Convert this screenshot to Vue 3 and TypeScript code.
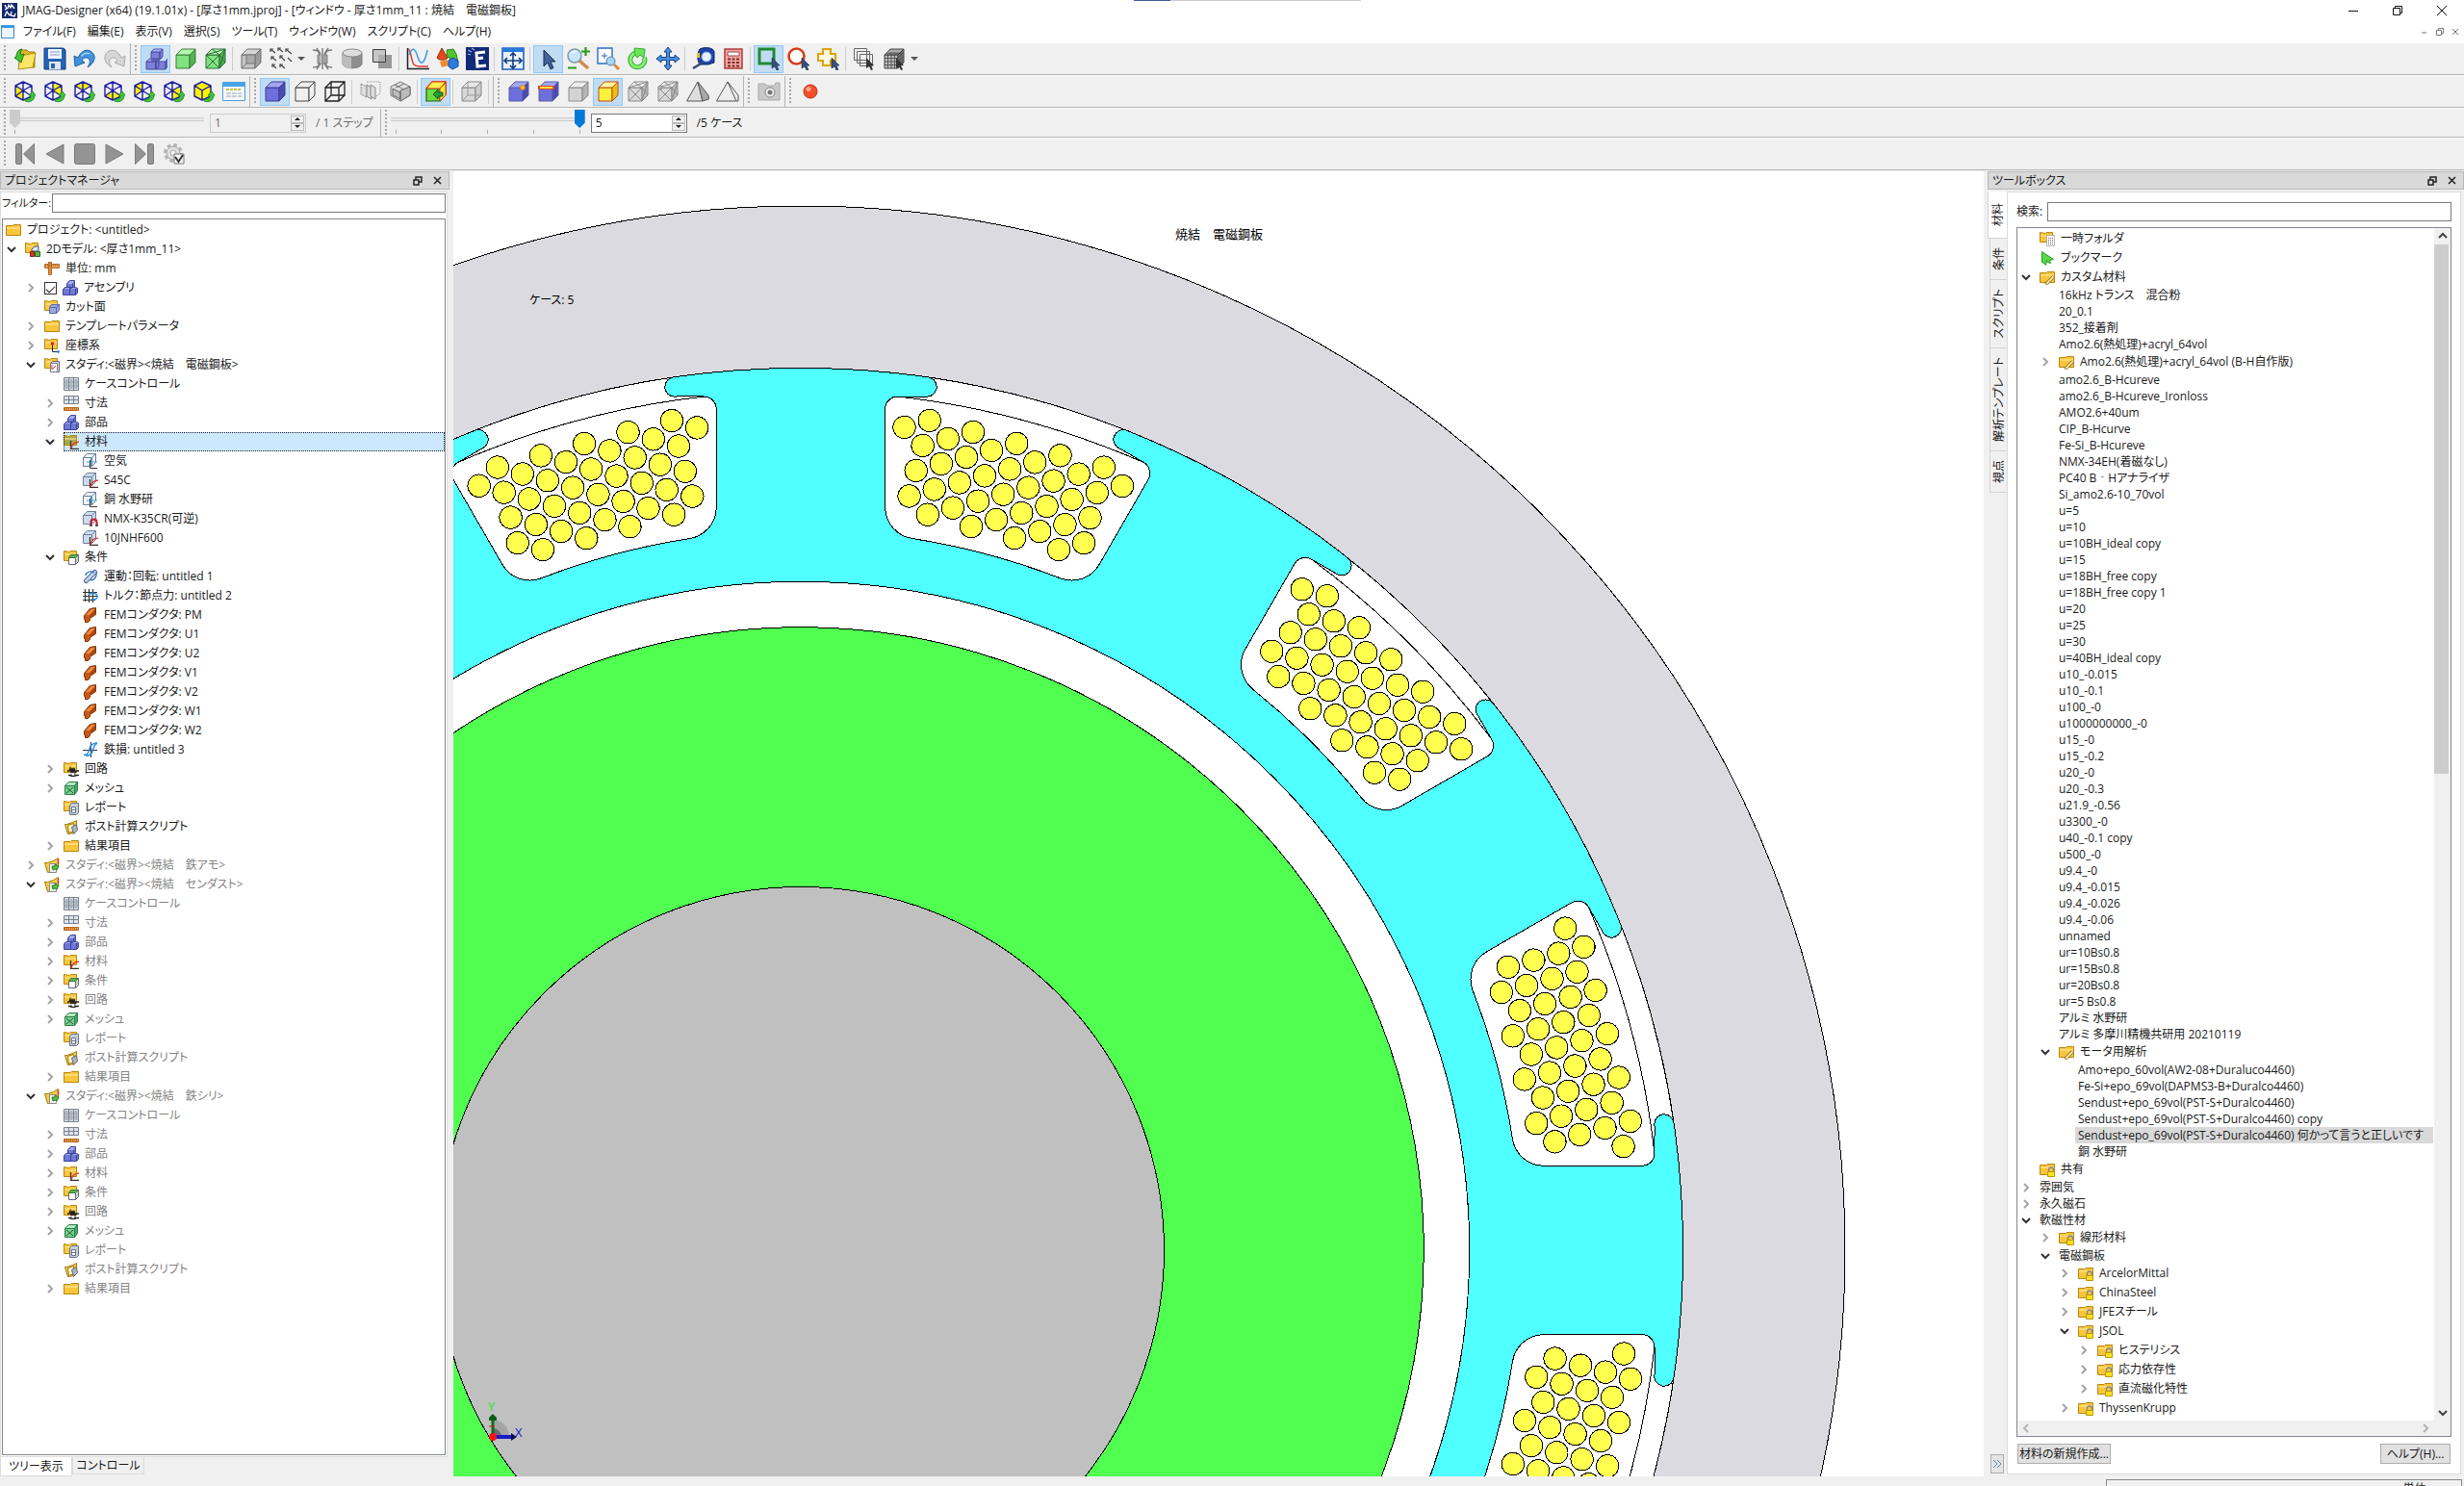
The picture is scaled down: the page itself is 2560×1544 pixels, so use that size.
<script setup lang="ts">
import { ref } from 'vue'

/* ---------- toolbar icons, drawn on a 24 x 24 grid ---------- */
const cube = (front: string, top: string, side: string, line: string): string =>
  `<g stroke="${line}" stroke-linejoin="round"><path fill="${front}" d="M2 8h14v14H2z"/><path fill="${top}" d="M2 8l6-6h14l-6 6z"/><path fill="${side}" d="M16 8l6-6v14l-6 6z"/></g>`

const viewCube = (face: string): string =>
  `<path fill="#fff200" d="${face}"/><path fill="none" stroke="#1c1ca8" stroke-width="1.4" stroke-linejoin="round" d="M10 2l9 4v11l-9 4-8-4V6zM2 6l8 5 9-5M10 11v10M10 2v9M2 17l8-6 9 6"/><path fill="#3fc43a" stroke="#14801a" stroke-width=".8" d="M12 20c4 1 6-1 6-4h-2l4-4 3 4h-1c0 6-6 8-10 6z"/>`

const pointer = '<path fill="#35507c" stroke="#1d2c48" stroke-width=".6" d="M15 11l8 8-3 .3 2 4-2 .7-2-4-3 2z"/>'

const grayCubeX = cube('#d8d8d8', '#eee', '#bbb', '#8a8a8a') + '<path stroke="#8a8a8a" fill="none" d="M2 8l14 14M16 8L2 22M16 8l6 8M16 22l6-20M2 8L22 2M8 2l8 6"/>'

const box = '<path fill="#7d80d8" stroke="#4a4ca0" d="M2 15h10v8H2zM2 15l3-3h10l-3 3zM12 15l3-3v8l-3 3zM12 15h10v8H12zM22 15l2-3v8l-2 3zM7 5h9v8H7zM7 5l3-3h9l-3 3zM16 5l3-3v8l-3 3z"/><path fill="#a9abf0" d="M8 4.500l2-2h8l-2 2zM3 14.500l2-2h2v2z"/>'

const T: Record<string, string> = {
  open: '<path fill="#e0b820" stroke="#9c7a10" d="M6 3h8l2 2h6v16H6z"/><path fill="#ffe566" stroke="#b08c18" d="M7 9l16-3-3 15-15 2z"/><path fill="#43c232" stroke="#1c7d14" d="M3 10c0-5 3-8 6-8-2 2-2 4-1 6l3-1-3 9-7-5z"/>',
  save: '<path fill="#2464b4" stroke="#123c7c" d="M1 1h20l2 2v20H1z"/><path fill="#eef4ff" d="M5 2h14v10H5z"/><path stroke="#8899b8" d="M7 5h10M7 8h10"/><path fill="#dfe6f0" d="M6 15h12v8H6z"/><path fill="#2464b4" d="M8 17h4v5H8z"/>',
  undo: '<path fill="#3f93dc" stroke="#1c5ca4" d="M1 9l1 11 10-4-3-2c2-4 6-4 8-1 1 2 0 5-2 8 6-4 9-9 6-14C17 1 9 2 5 11z"/><path fill="#a8d4f8" d="M8 9c3-4 8-5 11-1-4-2-8-1-10 2z"/>',
  redo: '<path fill="#d6d6d6" stroke="#ababab" d="M23 9l-1 11-10-4 3-2c-2-4-6-4-8-1-1 2 0 5 2 8-6-4-9-9-6-14C7 1 15 2 19 11z"/>',
  parts: box,
  green: cube('#7fe47f', '#b4f7b0', '#52b452', '#3c7c3c'),
  meshg: cube('#7fe47f', '#b4f7b0', '#52b452', '#2f6c38') + '<path stroke="#2f6c38" fill="none" d="M2 8l14 14M16 8L2 22M16 8l6 8M16 22l6-20M2 8L22 2M8 2l8 6"/>',
  wire: cube('#c4c4c4', '#d6d6d6', '#9c9c9c', '#6e6e6e') + '<path fill="#aaa" stroke="#777" d="M7 8h9v9H7zM2 22l5-5"/>',
  vectors: '<g stroke="#444" stroke-width="1.200" fill="none"><path d="M1 2l5 4M9 1l5 4M17 2l6 5M2 10l5 4M11 9l5 5M19 11l4 4M3 18l4 4M11 18l5 4"/><path d="M1 5V2h3M9 4V1h3M17 5V2h3M2 13v-3h3M11 12V9h3M3 21v-3h3M11 21v-3h3"/></g>',
  flux: '<path fill="#a5a5a5" stroke="#808080" d="M7 8h10v9H7z"/><path fill="#d0d0d0" d="M10 8h3v9h-3z"/><g stroke="#7b7b7b" fill="none" stroke-width="1.400"><path d="M12 1v22M2 3c5 0 7 2 7 5M22 3c-5 0-7 2-7 5M2 21c5 0 7-2 7-5M22 21c-5 0-7-2-7-5M6 1l4 6M18 1l-4 6M6 23l4-6M18 23l-4-6"/></g>',
  cyl: '<path fill="#8f8f8f" stroke="#7c7c7c" d="M2 6v12c3 5 17 5 20 0V6z"/><path fill="#bdbdbd" d="M2 6v12c2 3 6 4 9 4V8z"/><ellipse cx="12" cy="6" rx="10" ry="4" fill="#ddd" stroke="#888"/>',
  squares: '<path fill="#999" d="M8 8h14v14H8z"/><path fill="#b5b5b5" fill-opacity=".7" stroke="#3c3c3c" d="M2.500 2.500h13v13h-13z"/>',
  graph: '<path stroke="#222" fill="none" stroke-width="1.500" d="M1.500 1v21.500H24"/><path stroke="#d83a3a" stroke-width="1.500" fill="none" d="M2 2c3 0 3 12 6 16 3 3 9 2 15 2"/><path stroke="#3b9be0" stroke-width="1.500" fill="none" d="M3 8c3-8 6-8 9 2s7 8 10-7"/>',
  shapes: '<path fill="#e24a1c" stroke="#a02a0a" d="M6 1l6 10c-2 3-9 3-11 0z"/><path fill="#52c430" stroke="#28861a" d="M11 3l7-1 3 5 2 9-8 1-1-7-2 1z"/><path fill="#f08a28" d="M4 15l8-2 1 6-7 2z"/><path fill="#2c7ce0" stroke="#154a98" d="M13 14l4-3 6 3v6l-6 3-4-3z"/>',
  eee: '<path fill="#102a78" d="M0 0h24v24H0z"/><path stroke="#9fb4e0" stroke-width="1.200" d="M2 3l4 2M6 1l3 2M2 7l3 1"/><path fill="none" stroke="#fff" stroke-width="3" d="M20 5l-9 1 1 14 9-1M11 12l7-1"/>',
  fit: '<path fill="#eaf2ff" stroke="#1b5fc0" stroke-width="1.600" d="M1 1h22v22H1z"/><path fill="#2878dc" d="M1 1h22v4H1z"/><path stroke="#123c78" fill="none" stroke-width="1.600" d="M3 14h18M12 6v16M6 11l-3 3 3 3M18 11l3 3-3 3M9 9l3-3 3 3M9 19l3 3 3-3"/>',
  arrow: '<path fill="#41629a" stroke="#1a2c50" d="M7 3v17l4-4 3 7 3-1.500-3-6.500h5z"/>',
  zoompm: '<path stroke="#d88a48" stroke-width="3.500" d="M13 14l9 8"/><circle cx="8" cy="9" r="7" fill="#c8e6fa" stroke="#7d98b0" stroke-width="1.500"/><path fill="#fff" d="M4 7c1-3 4-4 7-3-3 1-5 2-7 3z"/><path stroke="#2a9a1c" stroke-width="2.200" d="M19.500 0v9M15 4.500h9M1 21.500h9"/>',
  zoomr: '<path fill="#fff" stroke="#2c6cc4" stroke-width="1.400" d="M1 1h15v16H1z"/><path stroke="#2c6cc4" d="M8 6v6M5 9h6"/><path stroke="#d88a48" stroke-width="3" d="M18 18l5 5"/><circle cx="14.500" cy="14.500" r="4.500" fill="#a8d4f2" stroke="#5080a8"/>',
  rotate: '<path fill="none" stroke="#2fae34" stroke-width="5" d="M18.500 11a7.500 7.500 0 1 1-9-5"/><path fill="none" stroke="#86ee70" stroke-width="3" d="M18.500 11a7.500 7.500 0 1 1-9-5"/><path fill="#6be65c" stroke="#2fae34" d="M8 1l11 1-1 9-4-3-3 3-2-3z"/>',
  move: '<path fill="#4a90e0" stroke="#123c80" d="M12 0l4 5h-2.500v5.500H19V8l5 4-5 4v-2.500h-5.500V19H16l-4 5-4-5h2.500v-5.500H5V16l-5-4 5-4v2.500h5.500V5H8z"/>',
  tape: '<path fill="#2044a4" stroke="#10246c" d="M8 2c6-3 15-1 15 3v11l-6 2H8c-3-5-3-11 0-16z"/><circle cx="15" cy="10" r="5" fill="#e8f2ff" stroke="#7fa8e8"/><path fill="#e8c020" d="M5 6h3v5H5z"/><path stroke="#384870" stroke-width="2.500" d="M1 22l10-6"/>',
  calc: '<path fill="#f2a8a4" stroke="#b03a38" stroke-width="1.500" d="M3 2h18v20H3z"/><path fill="#fff" stroke="#944" d="M6 5h12v4H6z"/><path stroke="#7b2c2c" stroke-width="2" stroke-dasharray="3 1.500" d="M6 12.500h12M6 16h12M6 19.500h12"/>',
  selrect: '<path fill="none" stroke="#1f8a34" stroke-width="3" d="M2 2h15v15H2z"/>' + pointer,
  selcirc: '<circle cx="9.500" cy="9.500" r="8" fill="#fff" stroke="#d83a18" stroke-width="2.500"/>' + pointer,
  selplus: '<path fill="#fffbe0" stroke="#dca410" stroke-width="2.200" d="M6 2h8v5h5v7h-5v5H6v-5H1V7h5z"/>' + pointer,
  layers: '<path fill="none" stroke="#666" d="M1.500 1.500h13v12h-13zM4.500 4.500h13v12h-13zM7.500 7.500h13v12h-13z"/><path fill="#333" d="M14 11l8 8-3 .3 2 4-2 .7-2-4-3 2z"/>',
  meshsel: cube('#bbb', '#aaa', '#888', '#444') + '<path stroke="#444" stroke-width=".8" fill="none" d="M5.500 8v14M9 8v14M12.500 8v14M2 11.500h14M2 15h14M2 18.500h14M16 11l6-6M16 15l6-6M16 19l6-6M6 6h13M4 7h13M18 6v14M20 4v14"/><path fill="#333" d="M14 11l8 8-3 .3 2 4-2 .7-2-4-3 2z"/>',
  v1: viewCube('M2 6l8 5v10l-8-4z'),
  v2: viewCube('M10 2l9 4v11l-9-6z'),
  v3: viewCube('M2 6l8-4 9 4-9 5z'),
  v4: viewCube('M2 17l8-6 9 6-9 4z'),
  v5: viewCube('M2 6l8-4v9l-8 6z'),
  v6: viewCube('M10 11l9-5v11l-9 4z'),
  v7: viewCube('M10 2l9 4v11l-9 4-8-4V6z').replace('M10 2v9M2 17l8-6 9 6', ''),
  win: '<path fill="#f4f8fc" stroke="#4aa0e0" d="M.5 2.500h23v19H.5z"/><path fill="#4aa4e8" d="M1 3h22v4H1z"/><path stroke="#c8c050" stroke-width="2" stroke-dasharray="3 1" d="M4 10h16"/><path stroke="#99a4b0" stroke-dasharray="5 1" d="M4 14h16M4 17h16"/>',
  blue: cube('#6d70dc', '#a3a6f2', '#4a4cb0', '#3c3e90'),
  outline: cube('#f0f0f0', '#f0f0f0', '#f0f0f0', '#444'),
  frame: '<path fill="none" stroke="#222" stroke-width="1.300" d="M2 8h14v14H2zM8 2h14v14H8zM2 8l6-6M16 8l6-6M16 22l6-6M2 22l6-6"/>',
  slices: '<g fill="#ddd" stroke="#888"><path d="M2 4l6 3v11l-6-3z" stroke-dasharray="2 1"/><path d="M8 5l5 3v12l-5-3z"/><path d="M12 5l5 3v12l-5-3z"/><path fill="none" stroke-dasharray="1 1" d="M8 2h14v12l-4 3"/></g>',
  hexbox: '<path fill="#e0e0e0" stroke="#777" d="M12 2l10 5v9l-10 6-10-6V7z"/><path fill="#bbb" stroke="#666" d="M12 11l10-4v9l-10 6zM4 9l8 4v7l-8-4z"/><path stroke="#777" d="M6 5l10 5M16 4L7 8"/>',
  colorcube: '<path fill="#ffee30" stroke="#d83a18" stroke-width="1.600" d="M2 9l6-7h14v13l-6 7"/><path fill="#6bdc3c" stroke="#1e5c1c" stroke-width="1.200" d="M2 9h14v13H2z"/><path fill="#ffe838" stroke="#d83a18" d="M16 9l6-6v13l-6 6z"/><path fill="#fff04a" stroke="#d83a18" d="M2 9l6-7h14l-6 7z"/><path fill="#2aa038" stroke="#0c5c18" d="M9 15l5-5v3h5v4h-5v3z"/>',
  graywire: cube('#d8d8d8', '#e8e8e8', '#ccc', '#888') + '<path fill="none" stroke="#999" d="M8 2v14h14M2 22l6-6"/>',
  bluepoint: cube('#6d70dc', '#a3a6f2', '#4a4cb0', '#5a5ca8') + '<circle cx="16" cy="8" r="2.500" fill="#ffc030" stroke="#d07820"/>',
  blueedge: cube('#6d70dc', '#a3a6f2', '#4a4cb0', '#5a5ca8') + '<path stroke="#e04828" stroke-width="4" d="M1 8h17"/><path stroke="#ffe040" stroke-width="2" d="M3 8h13"/>',
  graycube: cube('#d4d4d4', '#ececec', '#b4b4b4', '#8a8a8a'),
  yellow: cube('#fff23c', '#fff99c', '#e8c020', '#c04a18'),
  graymesh: grayCubeX,
  graymesh2: grayCubeX + '<circle cx="4" cy="8" r="2" fill="#bbb" stroke="#888"/>',
  pyr: '<path fill="#dedede" stroke="#555" d="M12 2L.5 22H17z"/><path fill="#a8a8a8" stroke="#555" d="M12 2l5 20 6.500-2L23 16z"/>',
  pyr2: '<path fill="#ececec" stroke="#555" d="M12 2L.5 22H23V16z"/><path fill="none" stroke="#555" d="M12 2l9 20"/>',
  camera: '<path fill="#c8c8c8" stroke="#aaa" d="M1 4h7l2 2h8l1-3h4v18H1z"/><circle cx="13" cy="13" r="5" fill="#eee" stroke="#888"/><circle cx="13" cy="13" r="2.500" fill="#777"/>',
  ball: '<circle cx="12" cy="12" r="7" fill="#f4502c" stroke="#c03010"/><circle cx="10" cy="9.500" r="2.500" fill="#ffa890"/>',
  first: '<g fill="#949494" stroke="#7a7a7a"><rect x="2.500" y="1.500" width="6" height="21" rx="1.500"/><path d="M21.500 1.500v21L10.500 12z"/></g>',
  prev: '<path fill="#949494" stroke="#7a7a7a" stroke-linejoin="round" d="M21 2v20L3 12z"/>',
  stop: '<rect x="1.500" y="1.500" width="21" height="21" rx="2" fill="#949494" stroke="#7a7a7a"/>',
  play: '<path fill="#949494" stroke="#7a7a7a" stroke-linejoin="round" d="M3 2v20l18-10z"/>',
  last: '<g fill="#949494" stroke="#7a7a7a"><rect x="15.500" y="1.500" width="6" height="21" rx="1.500"/><path d="M2.500 1.500v21L13.500 12z"/></g>',
  gear: '<circle cx="11" cy="11" r="8" fill="none" stroke="#b4b4b4" stroke-width="4" stroke-dasharray="3.500 2.780"/><circle cx="11" cy="11" r="7" fill="#e0e0e0" stroke="#a4a4a4"/><circle cx="11" cy="11" r="3" fill="#f0f0f0" stroke="#aaa"/><path fill="#f4f4f4" stroke="#777" d="M12 12h10v10H12z"/><path fill="none" stroke="#333" stroke-width="2" d="M13 15l3.500 5L21 13"/>',
}

/* ---------- tree icons, drawn on a 16 x 16 grid ---------- */
const folder = (a = '#f8c63c', b = '#b8860f'): string =>
  `<path fill="${a}" stroke="${b}" d="M.5 3.500v10h15v-11H8l-1 1z"/><path fill="#ffe38a" fill-opacity=".7" d="M1 5h14v2H1z"/>`
const halfFolder = (a = '#f8c63c'): string =>
  `<path fill="${a}" stroke="#b8860f" d="M.5 1.500v10h13v-10H7l-1 1z"/><path fill="#ffe38a" fill-opacity=".6" d="M1 4h12v2H1z"/>`
const curve = '<path fill="none" stroke="#333" stroke-width="1.300" d="M7.500 7v8.500H16"/><path fill="none" stroke="#e03a28" stroke-width="1.500" d="M8 15c1-5 3-6 8-7"/>'
const sheetCube = (fill: string): string =>
  `<path fill="${fill}" stroke="#6b7f98" d="M.5 4.500h9v9h-9zM.5 4.500l4-4h9l-4 4zM9.500 4.500l4-4v9l-4 4z"/>`

const S: Record<string, string> = {
  folder: folder(),
  model: halfFolder() + '<path fill="#dce6f6" stroke="#456" d="M7 8l3-3h4v5H7z"/><path fill="#d83a28" stroke="#901c10" d="M5.500 10.500h4v5h-4z"/><path fill="#58b848" stroke="#286820" d="M10.500 10.500h5v5h-5z"/>',
  unit: '<path fill="#f0a860" stroke="#b86820" d="M.5 3.500h15v4h-15z"/><path fill="#f0a860" stroke="#b86820" d="M4.500 1.500h3v13h-3z"/><path stroke="#8a4810" stroke-dasharray="1 1" d="M1 5h14M6 2v12"/>',
  parts: '<path fill="#6f78d4" stroke="#3c4498" d="M.5 9.500l2-2h11l2 1v5l-2 2H.5zM4.500 3.500l3-3h5v6l-2 2h-6z"/><path fill="#a5acf2" d="M5 4l3-3h4l-2 3zM2 9l1-1h4v1zM9 9l1-1h4l-1 1z"/><path stroke="#3c4498" d="M7.500 9v6M13.500 9v6M10.500 4v4" fill="none"/>',
  cut: halfFolder() + '<path fill="#98a8e0" stroke="#5868a8" d="M5.500 8.500h7v6h-7zM5.500 8.500l2-3h8l-3 3zM12.500 8.500l3-3v6l-3 3z"/>',
  axis: halfFolder() + '<path fill="none" stroke="#222" d="M8.500 6v8.500H15"/><circle cx="8.500" cy="6" r="1.800" fill="#d82818"/><circle cx="14.500" cy="14.500" r="1.400" fill="#2a86e0"/>',
  study: halfFolder() + '<path fill="#d8dce4" stroke="#667" d="M8.500 4.500h7v11h-9v-9z"/><path fill="#fff" stroke="#778" d="M6.500 6.500h7v9h-7z"/><path stroke="#c83a38" fill="none" d="M8 8v5l4-4"/>',
  grid: '<path fill="#dce2ec" stroke="#78828e" d="M.5 1.500h15v13H.5zM.5 6h15M.5 10h15M5.500 1v13M10.500 1v13"/><path stroke="#78828e" stroke-dasharray="3 2" d="M1.500 4h14M1.500 8h14M1.500 12h14"/>',
  dims: '<path fill="#dce2ec" stroke="#78828e" d="M.5 .5h15v8H.5zM.5 4.500h15M5.500 .5v8M10.500 .5v8"/><path fill="#f0a050" stroke="#b86820" d="M.5 12.500h15v3H.5z"/><path stroke="#8a4810" stroke-dasharray="1 1" d="M1 14h14"/>',
  mat: halfFolder() + curve,
  matsel: halfFolder('#a8a84c') + curve,
  air: sheetCube('#eef4fa') + '<path fill="none" stroke="#4aa8d8" d="M4 9h11M8.500 4v9"/><path fill="none" stroke="#333" d="M7.500 7v8.500H15"/>',
  steel: sheetCube('#cddbea') + curve,
  magnet: sheetCube('#cddbea') + '<path fill="none" stroke="#c82030" stroke-width="2.200" d="M8.500 15.500v-4a3 3 0 0 1 6 0v4"/><path stroke="#444" stroke-width="2.500" d="M8.500 14v2M14.500 14v2"/>',
  cond: halfFolder() + '<path fill="#fff" stroke="#667" d="M5.500 8.500h7v7h-7z"/><path fill="#58b848" stroke="#38783c" d="M5.500 8.500l2-3h8l-3 3z"/><path fill="#c8d8cc" stroke="#667" d="M12.500 8.500l3-3v7l-3 3z"/>',
  motion: '<path stroke="#506490" stroke-width="5" stroke-linecap="round" d="M3.500 12.500l9-9"/><path stroke="#c4d4ec" stroke-width="3" stroke-linecap="round" d="M3.500 12.500l9-9"/><path fill="none" stroke="#2a78c8" stroke-width="1.300" d="M3 7c0-4 5-5 9-3M14 4c1 4-2 8-6 8"/>',
  torque: '<path fill="none" stroke="#333" stroke-width="1.200" d="M2.500 1v13M6.500 1v14M10.500 1v14M0 4.500h15M0 8.500h15M0 12.500h13"/><path fill="none" stroke="#2a90d8" stroke-width="1.400" d="M6 7c3-3 8-2 9 1s-3 5-6 3"/>',
  fem: '<path fill="#c85818" stroke="#7c3408" d="M1.500 8.500l6-7 6-1v7l-6 4v2l-2 2h-3v-3h-1z"/><path fill="#ec8c40" d="M3 8l6-6h4L7 8z"/><path fill="#a84410" d="M7 9l6-7v5l-5 4z"/>',
  iron: '<path fill="none" stroke="#333" d="M8.500 0v16M0 8.500h15"/><path fill="none" stroke="#2a90e0" stroke-width="1.500" d="M1 13c4 1 5-2 6-6s3-6 8-6M3 14c5 1 7-3 8-7s2-5 4-6"/>',
  circuit: halfFolder() + '<path fill="none" stroke="#222" stroke-width="1.300" d="M4 10h2l1-3 1 5 1-5 1 5 1-5 1 5 1-2h3M5 14.500h3M8 13.500v2h4v-2M12 14.500h4"/>',
  mesh: '<path fill="#78d08c" stroke="#2c7c48" d="M1.500 5.500h10v9h-10z"/><path fill="#b0ecc0" stroke="#2c7c48" d="M1.500 5.500l4-4h9l-3 4z"/><path fill="#48a868" stroke="#2c7c48" d="M11.500 5.500l3-4v9l-3 4z"/><path stroke="#1c5c38" d="M3 7l7 6M10 7l-7 6"/>',
  report: halfFolder() + '<path fill="#c8ced8" stroke="#667488" d="M6.500 5.500l2-2h7v10l-2 2h-7z"/><path fill="#fff" stroke="#667488" d="M8.500 7.500h4v6h-4zM8.500 10.500h4"/>',
  script: '<path fill="#f4d040" stroke="#a07810" d="M1.500 5.500h2l6-2 4-2v8l-2 5-7 1z"/><path fill="#fff8c8" stroke="#a07810" d="M4.500 6.500l6-2v8l-5 2z"/><path fill="#aeb4c0" stroke="#667" d="M8.500 8.500l5-3 1 6-4 4z"/>',
  oldstudy: '<path fill="#f4d040" stroke="#a07810" d="M.5 5.500h3l6-2 5-3v9l-3 5-8 1z"/><path fill="#f4f4f4" stroke="#889" d="M5.500 6.500h7v9h-7z"/><path stroke="#d03028" stroke-width="1.500" fill="none" d="M14.500 2v5"/><path fill="#58c03c" stroke="#2c7c20" d="M8 9h3V7l4 2-2 4-2-1-2 1z"/>',
  temp: halfFolder() + '<path fill="#fff" stroke="#778" stroke-dasharray="1 1" d="M7.500 4.500h8v11h-8z"/><path stroke="#667" stroke-dasharray="1 1" d="M9 7.500h5M9 9.500h5M9 11.500h5M9 13.500h5"/>',
  bookmark: '<path fill="#58d848" stroke="#2a9a28" d="M2.500 12.500V1.500l12 8-4 1 1 3-3-1-1-2-1 5-2-2z"/>',
  custom: folder() + '<path stroke="#806020" stroke-width="3.200" d="M6.500 15.500l8-8"/><path stroke="#ffe8a0" stroke-width="1.800" d="M7 15l7.500-7.500"/>',
  lock: folder() + '<path fill="none" stroke="#888" stroke-width="1.300" d="M9.500 11V8.500a2.500 2.500 0 0 1 5 0V11"/><path fill="#ffe020" stroke="#b89808" d="M8.500 10.500h7v5h-7z"/>',
}

/* ---------- menus and toolbars ---------- */
const menus = ['ファイル(F)', '編集(E)', '表示(V)', '選択(S)', 'ツール(T)', 'ウィンドウ(W)', 'スクリプト(C)', 'ヘルプ(H)']

/* '|' is a divider, 'v' a drop-down arrow, '*' marks a pressed button */
const row1: string[][] = [
  ['open', 'save', 'undo', 'redo'],
  ['*parts', 'green', 'meshg', '|', 'wire', 'vectors', 'v', 'flux', 'cyl', 'squares', '|', 'graph', 'shapes', 'eee', '|', 'fit', '|',
    '*arrow', 'zoompm', 'zoomr', 'rotate', 'move', '|', 'tape', 'calc', '|', '*selrect', 'selcirc', 'selplus', '|', 'layers', 'meshsel', 'v'],
]
const row2: string[][] = [
  ['v1', 'v2', 'v3', 'v4', 'v5', 'v6', 'v7', 'win'],
  ['*blue', 'outline', 'frame', '|', 'slices', 'hexbox', '|', '*colorcube', '|', 'graywire', '|'],
  ['bluepoint', 'blueedge', 'graycube', '*yellow', 'graymesh', 'graymesh2', 'pyr', 'pyr2'],
  ['camera'],
  ['ball'],
]
const player = ['first', 'prev', 'stop', 'play', 'last', 'gear']
const step = ref(1)
const caseNo = ref(5)
const stepPos = ref(0)

/* ---------- project tree ---------- */
interface Node { l: number; i: string; t: string; e?: '+' | '-'; c?: boolean; s?: boolean; g?: boolean }
const studyBody = (g: boolean): Node[] => [
  { l: 3, i: 'grid', t: 'ケースコントロール', g },
  { l: 3, i: 'dims', t: '寸法', e: '+', g },
  { l: 3, i: 'parts', t: '部品', e: '+', g },
  { l: 3, i: 'mat', t: '材料', e: '+', g },
  { l: 3, i: 'cond', t: '条件', e: '+', g },
  { l: 3, i: 'circuit', t: '回路', e: '+', g },
  { l: 3, i: 'mesh', t: 'メッシュ', e: '+', g },
  { l: 3, i: 'report', t: 'レポート', g },
  { l: 3, i: 'script', t: 'ポスト計算スクリプト', g },
  { l: 3, i: 'folder', t: '結果項目', e: '+', g },
]
const project: Node[] = [
  { l: 0, i: 'folder', t: 'プロジェクト: <untitled>' },
  { l: 1, i: 'model', t: '2Dモデル: <厚さ1mm_11>', e: '-' },
  { l: 2, i: 'unit', t: '単位: mm' },
  { l: 2, i: 'parts', t: 'アセンブリ', e: '+', c: true },
  { l: 2, i: 'cut', t: 'カット面' },
  { l: 2, i: 'folder', t: 'テンプレートパラメータ', e: '+' },
  { l: 2, i: 'axis', t: '座標系', e: '+' },
  { l: 2, i: 'study', t: 'スタディ:<磁界><焼結　電磁鋼板>', e: '-' },
  ...studyBody(false).slice(0, 3),
  { l: 3, i: 'matsel', t: '材料', e: '-', s: true },
  { l: 4, i: 'air', t: '空気' },
  { l: 4, i: 'steel', t: 'S45C' },
  { l: 4, i: 'air', t: '銅 水野研' },
  { l: 4, i: 'magnet', t: 'NMX-K35CR(可逆)' },
  { l: 4, i: 'steel', t: '10JNHF600' },
  { l: 3, i: 'cond', t: '条件', e: '-' },
  { l: 4, i: 'motion', t: '運動：回転: untitled 1' },
  { l: 4, i: 'torque', t: 'トルク：節点力: untitled 2' },
  ...['PM', 'U1', 'U2', 'V1', 'V2', 'W1', 'W2'].map((n): Node => ({ l: 4, i: 'fem', t: 'FEMコンダクタ: ' + n })),
  { l: 4, i: 'iron', t: '鉄損: untitled 3' },
  ...studyBody(false).slice(5),
  { l: 2, i: 'oldstudy', t: 'スタディ:<磁界><焼結　鉄アモ>', e: '+', g: true },
  { l: 2, i: 'oldstudy', t: 'スタディ:<磁界><焼結　センダスト>', e: '-', g: true },
  ...studyBody(true),
  { l: 2, i: 'oldstudy', t: 'スタディ:<磁界><焼結　鉄シリ>', e: '-', g: true },
  ...studyBody(true),
]

/* ---------- toolbox tree ---------- */
const plain = (l: number, names: string[]): Node[] => names.map((t) => ({ l, i: '', t }))
const toolbox: Node[] = [
  { l: 0, i: 'temp', t: '一時フォルダ' },
  { l: 0, i: 'bookmark', t: 'ブックマーク' },
  { l: 0, i: 'custom', t: 'カスタム材料', e: '-' },
  ...plain(1, ['16kHz トランス　混合粉', '20_0.1', '352_接着剤', 'Amo2.6(熱処理)+acryl_64vol']),
  { l: 1, i: 'custom', t: 'Amo2.6(熱処理)+acryl_64vol (B-H自作版)', e: '+' },
  ...plain(1, ['amo2.6_B-Hcureve', 'amo2.6_B-Hcureve_Ironloss', 'AMO2.6+40um', 'CIP_B-Hcurve', 'Fe-Si_B-Hcureve', 'NMX-34EH(着磁なし)',
    'PC40 B‐Hアナライザ', 'Si_amo2.6-10_70vol', 'u=5', 'u=10', 'u=10BH_ideal copy', 'u=15', 'u=18BH_free copy', 'u=18BH_free copy 1',
    'u=20', 'u=25', 'u=30', 'u=40BH_ideal copy', 'u10_-0.015', 'u10_-0.1', 'u100_-0', 'u1000000000_-0', 'u15_-0', 'u15_-0.2', 'u20_-0',
    'u20_-0.3', 'u21.9_-0.56', 'u3300_-0', 'u40_-0.1 copy', 'u500_-0', 'u9.4_-0', 'u9.4_-0.015', 'u9.4_-0.026', 'u9.4_-0.06', 'unnamed',
    'ur=10Bs0.8', 'ur=15Bs0.8', 'ur=20Bs0.8', 'ur=5 Bs0.8', 'アルミ 水野研', 'アルミ 多摩川精機共研用 20210119']),
  { l: 1, i: 'custom', t: 'モータ用解析', e: '-' },
  ...plain(2, ['Amo+epo_60vol(AW2-08+Duraluco4460)', 'Fe-Si+epo_69vol(DAPMS3-B+Duralco4460)', 'Sendust+epo_69vol(PST-S+Duralco4460)',
    'Sendust+epo_69vol(PST-S+Duralco4460) copy']),
  { l: 2, i: '', t: 'Sendust+epo_69vol(PST-S+Duralco4460) 何かって言うと正しいです', s: true },
  { l: 2, i: '', t: '銅 水野研' },
  { l: 0, i: 'lock', t: '共有' },
  { l: 0, i: '', t: '雰囲気', e: '+' },
  { l: 0, i: '', t: '永久磁石', e: '+' },
  { l: 0, i: '', t: '軟磁性材', e: '-' },
  { l: 1, i: 'lock', t: '線形材料', e: '+' },
  { l: 1, i: '', t: '電磁鋼板', e: '-' },
  { l: 2, i: 'lock', t: 'ArcelorMittal', e: '+' },
  { l: 2, i: 'lock', t: 'ChinaSteel', e: '+' },
  { l: 2, i: 'lock', t: 'JFEスチール', e: '+' },
  { l: 2, i: 'lock', t: 'JSOL', e: '-' },
  { l: 3, i: 'lock', t: 'ヒステリシス', e: '+' },
  { l: 3, i: 'lock', t: '応力依存性', e: '+' },
  { l: 3, i: 'lock', t: '直流磁化特性', e: '+' },
  { l: 2, i: 'lock', t: 'ThyssenKrupp', e: '+' },
]
const sideTabs = ['材料', '条件', 'スクリプト', '解析テンプレート', '視点']

/* ---------- motor cross-section, centred on the origin ---------- */
type P = [number, number]
const mirror = ([x, y]: P): P => {
  /* reflect over the slot axis, 15 degrees clockwise of the tooth above */
  const a = (150 * Math.PI) / 180
  return [x * Math.cos(a) + y * Math.sin(a), x * Math.sin(a) - y * Math.cos(a)]
}
const at = ([x, y]: P): string => `${x.toFixed(1)} ${(-y).toFixed(1)}`
const tip: P = [133, 906.9]
const under: P = [129, 887]
const shoulder: P = [100.7, 887]
const wall: P = [87.7, 874]
const foot: P = [87.7, 772.1]
const heel: P = [115.6, 739.5]
const slot = `M${at(heel)}A33 33 0 0 1 ${at(foot)}L${at(wall)}A13 13 0 0 1 ${at(shoulder)}L${at(under)}A10 10 0 0 0 ${at(tip)}`
  + `A916.6 916.6 0 0 1 ${at(mirror(tip))}A10 10 0 0 0 ${at(mirror(under))}L${at(mirror(shoulder))}A13 13 0 0 1 ${at(mirror(wall))}`
  + `L${at(mirror(foot))}A33 33 0 0 1 ${at(mirror(heel))}A748.5 748.5 0 0 0 ${at(heel)}Z`
const liner = `M${at(shoulder)}A893 893 0 0 1 ${at(mirror(shoulder))}`

/* wire bundle of the slot at 45 degrees: first wire of each row and its count */
const wireRows: [number, number, number][] = [
  [520.7, -686.7, 2], [527.7, -660.7, 3], [508.7, -641.7, 5], [489.3, -622.3, 7],
  [496.3, -596, 8], [529.3, -562.7, 7], [562.3, -529.7, 4], [596, -496.3, 2],
]
const wires = wireRows.flatMap(([x, y, n]) => Array.from({ length: n }, (_, k): P => [x + k * 26.15, y + k * 7]))
const slotTurns = [-30, 0, 30, 60, 90]
</script>

<template>
  <div class="app">
    <header class="title">
      <svg class="i16" viewBox="0 0 16 16" aria-hidden="true"><path fill="#14286c" d="M0 0h16v16H0z" /><path fill="none" stroke="#fff" stroke-width="1.300" d="M3 2l2 4-2 1M6 6l1-4 2 3 1-3 3 4M3 14l2-5 3 4M10 9l-1 4 4 1 1-3" /></svg>
      <span>JMAG-Designer (x64) (19.1.01x) - [厚さ1mm.jproj] - [ウィンドウ - 厚さ1mm_11 : 焼結　電磁鋼板]</span>
      <i class="peek" />
      <nav class="wbtns">
        <button aria-label="最小化"><svg viewBox="0 0 12 12"><path d="M1 6.500h10" /></svg></button>
        <button aria-label="元に戻す"><svg viewBox="0 0 12 12"><path d="M1.500 3.500h7v7h-7zM3.500 3V1.500h7v7H9" /></svg></button>
        <button aria-label="閉じる"><svg viewBox="0 0 12 12"><path d="M1 1l10 10M11 1L1 11" /></svg></button>
      </nav>
    </header>

    <nav class="menu">
      <svg class="i16" viewBox="0 0 16 16" aria-hidden="true"><path fill="#eef5fc" stroke="#3c8cd0" d="M1.500 1.500h13v13h-13z" /><path fill="#3c9ae4" d="M1 1h14v3H1z" /></svg>
      <button v-for="m in menus" :key="m">{{ m }}</button>
      <span class="mdi">
        <svg viewBox="0 0 8 8"><path d="M1 5h5" /></svg>
        <svg viewBox="0 0 8 8"><path d="M.5 2.500h5v5h-5zM2.500 2V.5h5v5H6" /></svg>
        <svg viewBox="0 0 8 8"><path d="M1 1l6 6M7 1L1 7" /></svg>
      </span>
    </nav>

    <div v-for="(row, r) in [row1, row2]" :key="r" class="bar">
      <div v-for="(grp, g) in row" :key="g" class="grp">
        <i class="grip" />
        <template v-for="(b, k) in grp" :key="k">
          <i v-if="b === '|'" class="div" />
          <button v-else-if="b === 'v'" class="drop" aria-label="メニューを開く" />
          <button v-else class="tb" :class="{ on: b[0] === '*' }" :aria-label="b.replace('*', '')">
            <svg viewBox="0 0 24 24" v-html="T[b.replace('*', '')]" />
          </button>
        </template>
      </div>
    </div>

    <div class="bar steps">
      <div class="grp off">
        <i class="grip" />
        <div class="slide">
          <input v-model="stepPos" type="range" min="0" max="4" aria-label="ステップ位置" disabled>
          <div class="ticks"><i /></div>
        </div>
        <div class="spin"><input v-model="step" aria-label="ステップ" disabled><span><button aria-label="増やす" /><button class="dn" aria-label="減らす" /></span></div>
        <span class="of">/ 1 ステップ</span>
      </div>
      <div class="grp">
        <i class="grip" />
        <div class="slide">
          <input v-model="caseNo" type="range" min="1" max="5" aria-label="ケース位置">
          <div class="ticks"><i v-for="n in 5" :key="n" /></div>
        </div>
        <div class="spin"><input v-model="caseNo" aria-label="ケース"><span><button aria-label="増やす" /><button class="dn" aria-label="減らす" /></span></div>
        <span class="of">/5 ケース</span>
      </div>
    </div>

    <div class="bar">
      <div class="grp">
        <i class="grip" />
        <button v-for="p in player" :key="p" class="tb" :aria-label="p"><svg viewBox="0 0 24 24" v-html="T[p]" /></button>
      </div>
    </div>

    <main>
      <aside class="left">
        <h2>プロジェクトマネージャ
          <svg viewBox="0 0 10 10"><path d="M1 4h5v5H1zM3 4V1h6v5H6" /></svg>
          <svg viewBox="0 0 10 10"><path d="M1 1l7 7M8 1L1 8" /></svg>
        </h2>
        <div class="pane">
          <div class="find"><label for="filter">フィルター:</label><input id="filter"></div>
          <ul class="tree">
            <li v-for="(n, k) in project" :key="k" :class="{ gray: n.g }" :style="{ paddingLeft: n.l * 20 + 3 + 'px' }">
              <svg v-if="n.e" class="exp" :class="{ open: n.e === '-' }" viewBox="0 0 10 10"><path :d="n.e === '-' ? 'M1 3l4 4 4-4' : 'M3 1l4 4-4 4'" /></svg>
              <span class="cell" :class="{ sel: n.s }">
                <input v-if="n.c" type="checkbox" checked :aria-label="n.t">
                <svg class="i16" viewBox="0 0 16 16" v-html="S[n.i]" />
                <span>{{ n.t }}</span>
              </span>
            </li>
          </ul>
        </div>
        <div class="tabs"><button class="cur">ツリー表示</button><button>コントロール</button></div>
      </aside>

      <svg class="view" viewBox="471 178 1590 1356" preserveAspectRatio="xMidYMid slice">
        <g transform="translate(832 1299)" stroke="#000" shape-rendering="crispEdges">
          <circle r="1085" fill="#dbdae0" />
          <circle r="916.600" fill="#50ffff" />
          <g v-for="a in slotTurns" :key="a" :transform="`rotate(${a})`">
            <path :d="slot" fill="#fff" />
            <path :d="liner" fill="none" />
            <g transform="rotate(-30)" fill="#ffff50"><circle v-for="(w, k) in wires" :key="k" :cx="w[0]" :cy="w[1]" r="11.700" /></g>
          </g>
          <circle r="694.700" fill="#fff" />
          <circle r="647.300" fill="#50ff50" />
          <circle r="377.500" fill="#c0c0c0" />
        </g>
        <text x="1221" y="248" font-size="13">焼結　電磁鋼板</text>
        <text x="550" y="316" font-size="12">ケース: 5</text>
        <path fill="#a4a4a4" d="M512 1493v-18a17 18 0 0 1 17 18z" />
        <path fill="#6e6870" d="M512 1493v-9a9 9 0 0 1 9 9z" />
        <path stroke="#0a6e18" stroke-width="3" d="M512 1492v-16" /><path fill="#0a5c14" d="M512 1469l4 4v3h-8v-3z" />
        <path stroke="#1818c8" stroke-width="4" d="M512 1493h19" /><path fill="#0c0c50" d="M537 1493l-6-4v8z" />
        <path stroke="#d02010" d="M508 1482h6" />
        <circle cx="512" cy="1493" r="4" fill="#f01414" />
        <text x="507" y="1466" font-size="13" fill="#28e828">Y</text>
        <text x="535" y="1493" font-size="13" fill="#1818d0">X</text>
      </svg>

      <aside class="right">
        <h2>ツールボックス
          <svg viewBox="0 0 10 10"><path d="M1 4h5v5H1zM3 4V1h6v5H6" /></svg>
          <svg viewBox="0 0 10 10"><path d="M1 1l7 7M8 1L1 8" /></svg>
        </h2>
        <div class="tool">
          <div class="vtabs">
            <button v-for="(s, k) in sideTabs" :key="s" :class="{ cur: k === 0 }"><span>{{ s }}</span></button>
            <button class="more" aria-label="さらに表示"><svg viewBox="0 0 10 10"><path d="M1 1l4 4-4 4M5 1l4 4-4 4" /></svg></button>
          </div>
          <div class="pane">
            <div class="find"><label for="search">検索:</label><input id="search"></div>
            <div class="list">
              <ul class="tree">
                <li v-for="(n, k) in toolbox" :key="k" :class="{ low: !n.i }" :style="{ paddingLeft: n.l * 20 + 3 + 'px' }">
                  <svg v-if="n.e" class="exp" :class="{ open: n.e === '-' }" viewBox="0 0 10 10"><path :d="n.e === '-' ? 'M1 3l4 4 4-4' : 'M3 1l4 4-4 4'" /></svg>
                  <span class="cell" :class="{ sel: n.s }">
                    <svg v-if="n.i" class="i16" viewBox="0 0 16 16" v-html="S[n.i]" />
                    <span>{{ n.t }}</span>
                  </span>
                </li>
              </ul>
              <div class="vs"><svg viewBox="0 0 10 10"><path d="M1 7l4-4 4 4" /></svg><i /><svg viewBox="0 0 10 10"><path d="M1 3l4 4 4-4" /></svg></div>
              <div class="hs"><svg viewBox="0 0 10 10"><path d="M7 1L3 5l4 4" /></svg><svg viewBox="0 0 10 10"><path d="M3 1l4 4-4 4" /></svg></div>
            </div>
            <div class="acts"><button>材料の新規作成...</button><button class="help">ヘルプ(H)...</button></div>
          </div>
        </div>
      </aside>
    </main>

    <footer><div>単位: mm</div></footer>
  </div>
</template>

<style>
html, body { margin: 0; background: #f0f0f0; }
</style>

<style scoped>
* { box-sizing: border-box; }
.app {
  height: 100vh; display: flex; flex-direction: column; overflow: hidden; background: #f0f0f0; color: #1a1a1a;
  font-family: "Open Sans", "Noto Sans CJK JP", sans-serif; font-size: 12px; line-height: 16px; font-feature-settings: "palt";
}
button, input { font: inherit; font-feature-settings: inherit; color: inherit; padding: 0; margin: 0; border: 0; background: none; border-radius: 0; }
input { outline: 0; }
i { display: block; }
ul { list-style: none; margin: 0; padding: 0; }
.i16 { width: 16px; height: 16px; flex: none; display: block; }

.title { height: 22px; flex: none; background: #fff; display: flex; align-items: center; padding-left: 2px; gap: 5px; position: relative; white-space: nowrap; }
.peek { position: absolute; left: 46%; top: 0; width: 236px; height: 1px; background: linear-gradient(90deg, #3c5c94 38px, #ccc 38px); }
.wbtns { margin-left: auto; display: flex; }
.wbtns button { width: 46px; height: 22px; display: grid; place-items: center; }
.wbtns svg { width: 12px; height: 12px; fill: none; stroke: #111; }
.menu { height: 22px; flex: none; background: #fff; display: flex; align-items: center; gap: 12px; }
.menu .i16 { margin-right: -4px; }
.mdi { margin-left: auto; display: flex; gap: 8px; padding: 0 5px; }
.mdi svg { width: 8px; height: 8px; fill: none; stroke: #777; }

.bar { height: 34px; flex: none; display: flex; border-bottom: 1px solid #b4b4b4; border-top: 1px solid #fafafa; }
.steps { height: 31px; }
.grp { display: flex; align-items: center; padding-right: 1px; border-right: 1px solid #b4b4b4; }
.grp:last-child { border: 0; }
.grip { width: 2px; height: 28px; margin: 0 4px; flex: none; background: repeating-linear-gradient(#a8a8a8 0 2px, transparent 2px 4px); }
.div { width: 6px; height: 25px; background: linear-gradient(90deg, transparent 2px, #ccc 2px 3px, transparent 3px); }
.tb { width: 31px; height: 29px; display: grid; place-items: center; }
.tb svg { width: 24px; height: 24px; display: block; }
.tb.on { background: #c0dcf3; border: 1px solid #90c8f6; }
.drop { width: 12px; height: 29px; display: grid; place-items: center; }
.drop::before { content: ""; border: 4px solid transparent; border-top-color: #555; border-bottom: 0; }
.slide { position: relative; width: 202px; height: 28px; }
.slide input { -webkit-appearance: none; appearance: none; display: block; width: 100%; height: 20px; background: linear-gradient(transparent 8px, #ccc 8px 9px, #e8eaea 9px 11px, #ccc 11px 12px, transparent 12px); }
.slide input::-webkit-slider-thumb { -webkit-appearance: none; width: 11px; height: 19px; background: #0078d7; clip-path: polygon(0 0, 100% 0, 100% 72%, 50% 100%, 0 72%); }
.off .slide input::-webkit-slider-thumb { background: #ccc; }
.ticks { display: flex; justify-content: space-between; padding: 1px 5px; }
.ticks i { width: 1px; height: 4px; background: #aaa; }
.spin { width: 100px; height: 20px; margin-left: 6px; display: flex; border: 1px solid #7a7a7a; background: #fff; padding: 1px; }
.spin input { flex: 1; min-width: 0; padding-left: 3px; }
.spin span { width: 14px; display: flex; flex-direction: column; }
.spin button { flex: 1; background: #f0f0f0; border: 1px solid #bbb; display: grid; place-items: center; }
.spin button::before { content: ""; border: 3px solid transparent; border-bottom-color: #222; border-top: 0; }
.spin .dn::before { border-top: 3px solid #222; border-bottom: 0; }
.of { margin: 0 6px 0 10px; white-space: nowrap; }
.off { color: #6d6d6d; }
.off .spin { background: #f0f0f0; border-color: #ccc; }

main { flex: 1; min-height: 0; display: flex; padding-top: 1px; }
aside { display: flex; flex-direction: column; flex: none; min-height: 0; }
.left { width: 467px; margin-right: 4px; }
.right { width: 495px; margin-left: 4px; }
.view { flex: 1; min-width: 0; height: 100%; background: #fff; display: block; }
h2 { margin: 0; height: 19px; flex: none; display: flex; align-items: center; gap: 11px; padding: 0 6px 0 4px; background: #d9d9d9; border: 1px solid #b8b8b8; font-size: 12px; font-weight: 400; }
h2 svg { width: 10px; height: 10px; fill: none; stroke: #222; stroke-width: 1.500; }
h2 svg:first-of-type { margin-left: auto; }
.pane { flex: 1; min-height: 0; display: flex; flex-direction: column; background: #fff; border: 1px solid #dcdcdc; }
.left .pane { margin: 2px 2px 0 0; padding: 0 1px 1px; }
.find { display: flex; align-items: center; height: 22px; flex: none; }
.find label { flex: none; white-space: nowrap; }
.find input { flex: 1; min-width: 0; height: 20px; border: 1px solid #7a7a7a; background: #fff; padding: 0 3px; }
.left .find label { width: 52px; font-size: 11px; }
.left .tree { flex: 1; margin-top: 5px; border: 1px solid #828790; padding: 1px 0; overflow: hidden; }
.tree li { height: 20px; display: flex; align-items: center; white-space: pre; position: relative; }
.tree .exp { position: absolute; width: 10px; height: 10px; margin-left: -19px; fill: none; stroke: #a4a4a4; stroke-width: 2; }
.tree .exp.open { stroke: #333; }
.cell { display: flex; align-items: center; gap: 6px; flex: 1; height: 20px; }
.cell input { appearance: none; width: 13px; height: 13px; border: 1px solid #333; background: #fff; display: grid; place-items: center; flex: none; }
.cell input::before { content: ""; width: 8px; height: 4px; border: solid #222; border-width: 0 0 1px 1px; transform: rotate(-45deg); }
.gray { color: #848484; }
.left .sel { background: #cce8ff; outline: 1px dotted #222; outline-offset: -1px; }
.tabs { height: 20px; display: flex; align-items: flex-start; flex: none; }
.tabs button { width: 75px; height: 18px; border: 1px solid #dcdcdc; border-top: 0; }
.tabs .cur { background: #fff; height: 20px; }

.tool { flex: 1; min-height: 0; display: flex; padding: 2px 3px 2px 0; }
.vtabs { width: 20px; display: flex; flex-direction: column; align-items: flex-end; padding-bottom: 1px; }
.vtabs button { width: 18px; border: 1px solid #d4d4d4; border-top: 0; border-right: 0; padding: 9px 0; display: grid; place-items: center; }
.vtabs button.cur { width: 20px; background: #fff; padding: 12px 0; }
.vtabs span { writing-mode: vertical-rl; text-orientation: sideways; transform: rotate(180deg); line-height: 16px; }
.vtabs button.more { width: 14px; height: 20px; padding: 0; margin: auto 3px 0 0; border: 1px solid #adadad; background: #e4e4e4; }
.more svg { width: 10px; height: 10px; fill: none; stroke: #5c84b4; }
.right .pane { padding: 9px 9px 10px; }
.right .find label { width: 32px; }
.list { flex: 1; min-height: 0; margin: 5px 0 7px; border: 1px solid #828790; display: grid; grid-template: minmax(0, 1fr) 16px / minmax(0, 1fr) 17px; background: #f0f0f0; }
.list .tree { overflow: hidden; background: #fff; padding: 1px 1px 0 20px; }
.tree li.low, .low .cell { height: 17px; }
.right .sel { background: #d9d9d9; margin-left: -3px; padding-left: 3px; }
.vs, .hs { display: flex; align-items: center; justify-content: space-between; padding: 4px; }
.vs { flex-direction: column; padding: 3px 0; }
.vs i { width: 15px; height: 550px; max-height: 46%; margin: 4px 2px auto 0; background: #cdcdcd; }
.vs svg, .hs svg { width: 10px; height: 10px; fill: none; stroke: #444; stroke-width: 2; flex: none; }
.hs svg { stroke: #b4b4b4; }
.acts { display: flex; justify-content: space-between; padding: 0 1px; flex: none; }
.acts button { height: 21px; min-width: 73px; padding: 0 1px; background: #e1e1e1; border: 1px solid #adadad; white-space: nowrap; }

footer { height: 10px; flex: none; display: flex; justify-content: flex-end; padding: 3px 2px 0 0; }
footer div { width: 370px; height: 7px; overflow: hidden; border: 1px solid #828790; border-bottom: 0; padding: 1px 8px 0 0; text-align: right; }
</style>
